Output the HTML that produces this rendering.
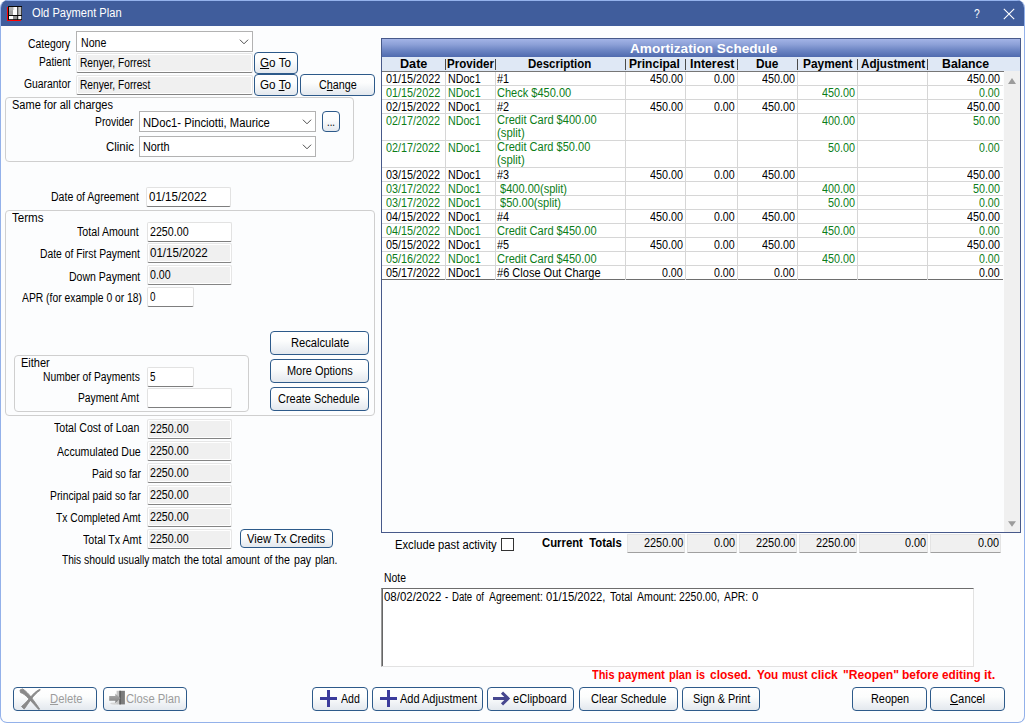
<!DOCTYPE html><html><head><meta charset="utf-8"><title>Old Payment Plan</title><style>
*{box-sizing:border-box;margin:0;padding:0}
html,body{width:1025px;height:723px;overflow:hidden;background:#fff}
body{font-family:"Liberation Sans",sans-serif;font-size:12px;color:#000;position:relative;line-height:14px}
.a{position:absolute}
.t{position:absolute;white-space:nowrap;line-height:14px;height:14px;transform-origin:0 0;display:block}
#win{position:absolute;left:0;top:0;width:1025px;height:723px;background:#fcfdfe;border:1px solid #93b1ea;border-top:none;border-radius:8px 8px 7px 7px;overflow:hidden}
#win>*{margin-left:-1px}
#tb{position:absolute;left:0;top:0;width:1025px;height:26px;background:#405d9c;border-top:1px solid #94b2ec}
.tx{position:absolute;background:#fff;border:1px solid #e2e2e2;border-bottom:1px solid #7e7e7e;border-radius:2px}
.tx.ro{background:#f0f0f0;box-shadow:inset 0 0 0 1px #fff;border-color:#e6e6e6;border-bottom-color:#848484}
.cb{position:absolute;background:#fff;border:1px solid #b2b2b2}
.btn{position:absolute;border:1px solid #2d5a8a;border-radius:4px;background:linear-gradient(#ffffff 0%,#fcfdfd 40%,#e3e8ee 100%)}
.gb{position:absolute;border:1px solid #cfcfcf;border-radius:4px}
#grid{position:absolute;left:381px;top:38px;width:640px;height:495px;border:1px solid #47598a;background:#fcfdfe;overflow:hidden}
#grid>*{margin-left:0}
#gt{position:absolute;left:0;top:0;width:638px;height:18px;background:linear-gradient(#a3b4e6 0%,#8da1d8 30%,#6a83c2 65%,#4f6aae 100%)}
#gh{position:absolute;left:0;top:18px;width:638px;height:15px;background:#dfe8f5;border-bottom:1px solid #767676}
.hs{position:absolute;top:20px;width:1px;height:11px;background:#4a4a4a}
.row{position:absolute;left:0;width:621px;border-bottom:1px solid #d6d6d6;background:#fff}
.vl{position:absolute;width:1px;background:#d6d6d6}
.tot{position:absolute;background:#f0f0f0;border:1px solid #e4e4e4;border-bottom-color:#a0a0a0;border-radius:1px}
</style></head><body>
<div id="win">
<div id="tb"></div>
<svg class="a" style="left:7px;top:6px" width="15" height="15" viewBox="0 0 15 15"><rect x="0" y="1" width="1" height="14" fill="#f00"/><rect x="0" y="14" width="14" height="1" fill="#f00"/><rect x="1" y="0" width="14" height="14" fill="#080808"/><rect x="2" y="1" width="4" height="8" fill="#b0b0b0"/><rect x="2" y="4.5" width="4" height="4.5" fill="#a0a0a0"/><rect x="6" y="1" width="4.3" height="8" fill="#fff"/><rect x="6" y="1" width="1.2" height="3" fill="#d8d8d8"/><rect x="11.2" y="1" width="3.1" height="8" fill="#c0c0c0"/><rect x="2" y="10" width="4" height="3.2" fill="#fff"/><rect x="6" y="10" width="4.3" height="3.2" fill="#909090"/><rect x="11.2" y="10" width="3.1" height="3.2" fill="#fff"/></svg>
<span class="t" style="left:32.20px;top:6px;transform:scaleX(0.8893);font-size:12.5px;color:#fff;">Old Payment Plan</span>
<span class="t" style="left:973.50px;top:7px;transform:scaleX(0.8673);color:#fff;">?</span>
<svg class="a" style="left:1003px;top:8px" width="12" height="12" viewBox="0 0 12 12"><path d="M0.8 0.8 L11.2 11.2 M11.2 0.8 L0.8 11.2" stroke="#fff" stroke-width="1.1" fill="none"/></svg>
<span class="t" style="left:28.40px;top:37px;transform:scaleX(0.8644);">Category</span>
<div class="cb" style="left:76px;top:31px;width:177px;height:21px;"></div>
<svg class="a" style="left:239px;top:39px" width="10" height="6" viewBox="0 0 10 6"><path d="M0.9 0.7 L5 4.8 L9.1 0.7" stroke="#444" stroke-width="0.95" fill="none"/></svg>
<span class="t" style="left:80.50px;top:36px;transform:scaleX(0.8819);">None</span>
<span class="t" style="left:38.60px;top:55px;transform:scaleX(0.8485);">Patient</span>
<div class="tx ro" style="left:76px;top:53px;width:177px;height:20px;"></div>
<span class="t" style="left:79.50px;top:56px;transform:scaleX(0.8500);">Renyer, Forrest</span>
<span class="t" style="left:23.80px;top:77px;transform:scaleX(0.8643);">Guarantor</span>
<div class="tx ro" style="left:76px;top:75px;width:177px;height:20px;"></div>
<span class="t" style="left:79.50px;top:78px;transform:scaleX(0.8500);">Renyer, Forrest</span>
<div class="btn" style="left:254px;top:52px;width:44px;height:22px;"></div>
<span class="t" style="left:260.00px;top:56px;transform:scaleX(0.9745);"><u>G</u>o To</span>
<div class="btn" style="left:254px;top:74px;width:44px;height:22px;"></div>
<span class="t" style="left:260.00px;top:78px;transform:scaleX(0.9745);">Go <u>T</u>o</span>
<div class="btn" style="left:300px;top:74px;width:75px;height:22px;"></div>
<span class="t" style="left:319.00px;top:78px;transform:scaleX(0.8987);">C<u>h</u>ange</span>
<div class="gb" style="left:5px;top:97px;width:349px;height:65px;"></div>
<span class="t" style="left:12.00px;top:98px;transform:scaleX(0.9177);">Same for all charges</span>
<span class="t" style="left:95.20px;top:115px;transform:scaleX(0.8593);">Provider</span>
<div class="cb" style="left:139px;top:111px;width:177px;height:21px;"></div>
<svg class="a" style="left:302px;top:119px" width="10" height="6" viewBox="0 0 10 6"><path d="M0.9 0.7 L5 4.8 L9.1 0.7" stroke="#444" stroke-width="0.95" fill="none"/></svg>
<span class="t" style="left:143.40px;top:116px;transform:scaleX(0.9367);">NDoc1- Pinciotti, Maurice</span>
<div class="btn" style="left:322px;top:111px;width:18px;height:21px;"></div>
<span class="t" style="left:326.50px;top:115px;transform:scaleX(0.7988);">...</span>
<span class="t" style="left:106.40px;top:140px;transform:scaleX(0.9542);">Clinic</span>
<div class="cb" style="left:139px;top:136px;width:177px;height:21px;"></div>
<svg class="a" style="left:302px;top:144px" width="10" height="6" viewBox="0 0 10 6"><path d="M0.9 0.7 L5 4.8 L9.1 0.7" stroke="#444" stroke-width="0.95" fill="none"/></svg>
<span class="t" style="left:143.20px;top:140px;transform:scaleX(0.9031);">North</span>
<span class="t" style="left:51.20px;top:190px;transform:scaleX(0.8775);">Date of Agreement</span>
<div class="tx" style="left:146px;top:187px;width:85px;height:20px;"></div>
<span class="t" style="left:148.60px;top:190px;transform:scaleX(0.9623);">01/15/2022</span>
<div class="gb" style="left:5px;top:210px;width:370px;height:206px;"></div>
<span class="t" style="left:11.90px;top:211px;transform:scaleX(0.9672);">Terms</span>
<span class="t" style="left:77.10px;top:225px;transform:scaleX(0.8879);">Total Amount</span>
<div class="tx" style="left:147px;top:222px;width:85px;height:20px;"></div>
<span class="t" style="left:150.00px;top:225px;transform:scaleX(0.8896);">2250.00</span>
<span class="t" style="left:40.20px;top:247px;transform:scaleX(0.8617);">Date of First Payment</span>
<div class="tx ro" style="left:147px;top:243px;width:85px;height:20px;"></div>
<span class="t" style="left:150.00px;top:246px;transform:scaleX(0.9623);">01/15/2022</span>
<span class="t" style="left:68.80px;top:270px;transform:scaleX(0.8762);">Down Payment</span>
<div class="tx ro" style="left:147px;top:265px;width:85px;height:20px;"></div>
<span class="t" style="left:150.00px;top:268px;transform:scaleX(0.8862);">0.00</span>
<span class="t" style="left:21.50px;top:291px;transform:scaleX(0.8609);">APR (for example 0 or 18)</span>
<div class="tx" style="left:147px;top:287px;width:47px;height:20px;"></div>
<span class="t" style="left:150.30px;top:290px;transform:scaleX(0.8224);">0</span>
<div class="gb" style="left:14px;top:355px;width:235px;height:57px;"></div>
<span class="t" style="left:21.00px;top:356px;transform:scaleX(0.9184);">Either</span>
<span class="t" style="left:43.40px;top:370px;transform:scaleX(0.8588);">Number of Payments</span>
<div class="tx" style="left:147px;top:367px;width:47px;height:20px;"></div>
<span class="t" style="left:150.30px;top:370px;transform:scaleX(0.8224);">5</span>
<span class="t" style="left:78.00px;top:391px;transform:scaleX(0.8546);">Payment Amt</span>
<div class="tx" style="left:147px;top:388px;width:85px;height:20px;"></div>
<div class="btn" style="left:270px;top:331px;width:99px;height:24px;"></div>
<span class="t" style="left:290.70px;top:336px;transform:scaleX(0.9298);">Recalculate</span>
<div class="btn" style="left:270px;top:359px;width:99px;height:24px;"></div>
<span class="t" style="left:286.50px;top:364px;transform:scaleX(0.9121);">More Options</span>
<div class="btn" style="left:270px;top:387px;width:99px;height:24px;"></div>
<span class="t" style="left:278.20px;top:392px;transform:scaleX(0.9128);">Create Schedule</span>
<span class="t" style="left:53.70px;top:421px;transform:scaleX(0.8818);">Total Cost of Loan</span>
<div class="tx ro" style="left:147px;top:419px;width:85px;height:20px;"></div>
<span class="t" style="left:150.00px;top:422px;transform:scaleX(0.8896);">2250.00</span>
<span class="t" style="left:57.30px;top:445px;transform:scaleX(0.8837);">Accumulated Due</span>
<div class="tx ro" style="left:147px;top:441px;width:85px;height:20px;"></div>
<span class="t" style="left:150.00px;top:444px;transform:scaleX(0.8896);">2250.00</span>
<span class="t" style="left:92.20px;top:467px;transform:scaleX(0.8505);">Paid so far</span>
<div class="tx ro" style="left:147px;top:463px;width:85px;height:20px;"></div>
<span class="t" style="left:150.00px;top:466px;transform:scaleX(0.8896);">2250.00</span>
<span class="t" style="left:50.20px;top:489px;transform:scaleX(0.8616);">Principal paid so far</span>
<div class="tx ro" style="left:147px;top:485px;width:85px;height:20px;"></div>
<span class="t" style="left:150.00px;top:488px;transform:scaleX(0.8896);">2250.00</span>
<span class="t" style="left:56.30px;top:511px;transform:scaleX(0.8581);">Tx Completed Amt</span>
<div class="tx ro" style="left:147px;top:507px;width:85px;height:20px;"></div>
<span class="t" style="left:150.00px;top:510px;transform:scaleX(0.8896);">2250.00</span>
<span class="t" style="left:82.60px;top:533px;transform:scaleX(0.8874);">Total Tx Amt</span>
<div class="tx ro" style="left:147px;top:529px;width:85px;height:20px;"></div>
<span class="t" style="left:150.00px;top:532px;transform:scaleX(0.8896);">2250.00</span>
<div class="btn" style="left:240px;top:529px;width:93px;height:19px;"></div>
<span class="t" style="left:247.00px;top:532px;transform:scaleX(0.9331);">View Tx Credits</span>
<span class="t" style="left:61.80px;top:553px;transform:scaleX(0.8425);">This</span>
<span class="t" style="left:83.80px;top:553px;transform:scaleX(0.8763);">should</span>
<span class="t" style="left:117.50px;top:553px;transform:scaleX(0.8378);">usually</span>
<span class="t" style="left:152.30px;top:553px;transform:scaleX(0.8627);">match</span>
<span class="t" style="left:184.00px;top:553px;transform:scaleX(0.9049);">the</span>
<span class="t" style="left:202.40px;top:553px;transform:scaleX(0.8815);">total</span>
<span class="t" style="left:225.90px;top:553px;transform:scaleX(0.8443);">amount</span>
<span class="t" style="left:263.50px;top:553px;transform:scaleX(0.8387);">of</span>
<span class="t" style="left:275.40px;top:553px;transform:scaleX(0.8929);">the</span>
<span class="t" style="left:293.80px;top:553px;transform:scaleX(0.8833);">pay</span>
<span class="t" style="left:314.50px;top:553px;transform:scaleX(0.8643);">plan.</span>
<div id="grid"><div id="gt"></div><div id="gh"></div>
<div class="hs" style="left:63px"></div>
<div class="hs" style="left:113px"></div>
<div class="hs" style="left:243px"></div>
<div class="hs" style="left:303px"></div>
<div class="hs" style="left:355px"></div>
<div class="hs" style="left:415px"></div>
<div class="hs" style="left:475px"></div>
<div class="hs" style="left:545px"></div>
<div class="row" style="top:33px;height:14px"></div>
<div class="row" style="top:47px;height:14px"></div>
<div class="row" style="top:61px;height:14px"></div>
<div class="row" style="top:75px;height:27px"></div>
<div class="row" style="top:102px;height:27px"></div>
<div class="row" style="top:129px;height:14px"></div>
<div class="row" style="top:143px;height:14px"></div>
<div class="row" style="top:157px;height:14px"></div>
<div class="row" style="top:171px;height:14px"></div>
<div class="row" style="top:185px;height:14px"></div>
<div class="row" style="top:199px;height:14px"></div>
<div class="row" style="top:213px;height:14px"></div>
<div class="row" style="top:227px;height:14px;border-bottom-color:#6e6e6e"></div>
<div class="vl" style="left:63px;top:33px;height:208px"></div>
<div class="vl" style="left:113px;top:33px;height:208px"></div>
<div class="vl" style="left:243px;top:33px;height:208px"></div>
<div class="vl" style="left:303px;top:33px;height:208px"></div>
<div class="vl" style="left:355px;top:33px;height:208px"></div>
<div class="vl" style="left:415px;top:33px;height:208px"></div>
<div class="vl" style="left:475px;top:33px;height:208px"></div>
<div class="vl" style="left:545px;top:33px;height:208px"></div>
<div class="a" style="left:622px;top:32px;width:16px;height:462px;background:#f0f0f0"></div>
<svg class="a" style="left:626px;top:39px" width="8" height="6" viewBox="0 0 8 6"><path d="M0 5.9 L4 0 L8 5.9Z" fill="#9c9c9c"/></svg>
<svg class="a" style="left:626px;top:482px" width="8" height="6" viewBox="0 0 8 6"><path d="M0 0.2 L4 5.8 L8 0.2Z" fill="#9c9c9c"/></svg>
</div>
<span class="t" style="left:629.70px;top:42px;transform:scaleX(1.0064);font-size:13.5px;font-weight:bold;color:#fff;">Amortization Schedule</span>
<span class="t" style="left:400.35px;top:57px;transform:scaleX(1.0095);font-size:12.5px;font-weight:bold;">Date</span>
<span class="t" style="left:446.60px;top:57px;transform:scaleX(0.9247);font-size:12.5px;font-weight:bold;">Provider</span>
<span class="t" style="left:528.40px;top:57px;transform:scaleX(0.9205);font-size:12.5px;font-weight:bold;">Description</span>
<span class="t" style="left:629.10px;top:57px;transform:scaleX(0.9641);font-size:12.5px;font-weight:bold;">Principal</span>
<span class="t" style="left:690.00px;top:57px;transform:scaleX(0.9833);font-size:12.5px;font-weight:bold;">Interest</span>
<span class="t" style="left:756.30px;top:57px;transform:scaleX(0.9524);font-size:12.5px;font-weight:bold;">Due</span>
<span class="t" style="left:803.40px;top:57px;transform:scaleX(0.9499);font-size:12.5px;font-weight:bold;">Payment</span>
<span class="t" style="left:861.10px;top:57px;transform:scaleX(0.9338);font-size:12.5px;font-weight:bold;">Adjustment</span>
<span class="t" style="left:942.10px;top:57px;transform:scaleX(0.9843);font-size:12.5px;font-weight:bold;">Balance</span>
<span class="t" style="left:386.30px;top:72px;transform:scaleX(0.9024);">01/15/2022</span>
<span class="t" style="left:447.80px;top:72px;transform:scaleX(0.8886);">NDoc1</span>
<span class="t" style="left:497.00px;top:72px;transform:scaleX(0.9000);">#1</span>
<span class="t" style="left:649.60px;top:72px;transform:scaleX(0.8991);">450.00</span>
<span class="t" style="left:713.90px;top:72px;transform:scaleX(0.8862);">0.00</span>
<span class="t" style="left:761.60px;top:72px;transform:scaleX(0.8991);">450.00</span>
<span class="t" style="left:966.60px;top:72px;transform:scaleX(0.8991);">450.00</span>
<span class="t" style="left:386.30px;top:86px;transform:scaleX(0.9024);color:#0c7d18;">01/15/2022</span>
<span class="t" style="left:447.80px;top:86px;transform:scaleX(0.8886);color:#0c7d18;">NDoc1</span>
<span class="t" style="left:497.00px;top:86px;transform:scaleX(0.9191);color:#0c7d18;">Check $450.00</span>
<span class="t" style="left:821.60px;top:86px;transform:scaleX(0.8991);color:#0c7d18;">450.00</span>
<span class="t" style="left:978.90px;top:86px;transform:scaleX(0.8862);color:#0c7d18;">0.00</span>
<span class="t" style="left:386.30px;top:100px;transform:scaleX(0.9000);">02/15/2022</span>
<span class="t" style="left:447.80px;top:100px;transform:scaleX(0.8886);">NDoc1</span>
<span class="t" style="left:497.00px;top:100px;transform:scaleX(0.9000);">#2</span>
<span class="t" style="left:649.60px;top:100px;transform:scaleX(0.8991);">450.00</span>
<span class="t" style="left:713.90px;top:100px;transform:scaleX(0.8862);">0.00</span>
<span class="t" style="left:761.60px;top:100px;transform:scaleX(0.8991);">450.00</span>
<span class="t" style="left:966.60px;top:100px;transform:scaleX(0.8991);">450.00</span>
<span class="t" style="left:386.30px;top:114px;transform:scaleX(0.9000);color:#0c7d18;">02/17/2022</span>
<span class="t" style="left:447.80px;top:114px;transform:scaleX(0.8886);color:#0c7d18;">NDoc1</span>
<span class="t" style="left:497.00px;top:113px;transform:scaleX(0.9216);color:#0c7d18;">Credit Card $400.00</span>
<span class="t" style="left:497.00px;top:126px;transform:scaleX(0.9440);color:#0c7d18;">(split)</span>
<span class="t" style="left:821.57px;top:114px;transform:scaleX(0.9000);color:#0c7d18;">400.00</span>
<span class="t" style="left:972.57px;top:114px;transform:scaleX(0.9000);color:#0c7d18;">50.00</span>
<span class="t" style="left:386.30px;top:141px;transform:scaleX(0.9000);color:#0c7d18;">02/17/2022</span>
<span class="t" style="left:447.80px;top:141px;transform:scaleX(0.8886);color:#0c7d18;">NDoc1</span>
<span class="t" style="left:497.00px;top:140px;transform:scaleX(0.9202);color:#0c7d18;">Credit Card $50.00</span>
<span class="t" style="left:497.00px;top:153px;transform:scaleX(0.9440);color:#0c7d18;">(split)</span>
<span class="t" style="left:827.57px;top:141px;transform:scaleX(0.9000);color:#0c7d18;">50.00</span>
<span class="t" style="left:978.90px;top:141px;transform:scaleX(0.8862);color:#0c7d18;">0.00</span>
<span class="t" style="left:386.30px;top:168px;transform:scaleX(0.9000);">03/15/2022</span>
<span class="t" style="left:447.80px;top:168px;transform:scaleX(0.8886);">NDoc1</span>
<span class="t" style="left:497.00px;top:168px;transform:scaleX(0.9000);">#3</span>
<span class="t" style="left:649.60px;top:168px;transform:scaleX(0.8991);">450.00</span>
<span class="t" style="left:713.90px;top:168px;transform:scaleX(0.8862);">0.00</span>
<span class="t" style="left:761.60px;top:168px;transform:scaleX(0.8991);">450.00</span>
<span class="t" style="left:966.60px;top:168px;transform:scaleX(0.8991);">450.00</span>
<span class="t" style="left:386.30px;top:182px;transform:scaleX(0.9000);color:#0c7d18;">03/17/2022</span>
<span class="t" style="left:447.80px;top:182px;transform:scaleX(0.8886);color:#0c7d18;">NDoc1</span>
<span class="t" style="left:500.30px;top:182px;transform:scaleX(0.9214);color:#0c7d18;">$400.00(split)</span>
<span class="t" style="left:821.57px;top:182px;transform:scaleX(0.9000);color:#0c7d18;">400.00</span>
<span class="t" style="left:972.57px;top:182px;transform:scaleX(0.9000);color:#0c7d18;">50.00</span>
<span class="t" style="left:386.30px;top:196px;transform:scaleX(0.9000);color:#0c7d18;">03/17/2022</span>
<span class="t" style="left:447.80px;top:196px;transform:scaleX(0.8886);color:#0c7d18;">NDoc1</span>
<span class="t" style="left:500.30px;top:196px;transform:scaleX(0.9221);color:#0c7d18;">$50.00(split)</span>
<span class="t" style="left:827.57px;top:196px;transform:scaleX(0.9000);color:#0c7d18;">50.00</span>
<span class="t" style="left:978.90px;top:196px;transform:scaleX(0.8862);color:#0c7d18;">0.00</span>
<span class="t" style="left:386.30px;top:210px;transform:scaleX(0.9000);">04/15/2022</span>
<span class="t" style="left:447.80px;top:210px;transform:scaleX(0.8886);">NDoc1</span>
<span class="t" style="left:497.00px;top:210px;transform:scaleX(0.9000);">#4</span>
<span class="t" style="left:649.60px;top:210px;transform:scaleX(0.8991);">450.00</span>
<span class="t" style="left:713.90px;top:210px;transform:scaleX(0.8862);">0.00</span>
<span class="t" style="left:761.60px;top:210px;transform:scaleX(0.8991);">450.00</span>
<span class="t" style="left:966.60px;top:210px;transform:scaleX(0.8991);">450.00</span>
<span class="t" style="left:386.30px;top:224px;transform:scaleX(0.9000);color:#0c7d18;">04/15/2022</span>
<span class="t" style="left:447.80px;top:224px;transform:scaleX(0.8886);color:#0c7d18;">NDoc1</span>
<span class="t" style="left:497.00px;top:224px;transform:scaleX(0.9216);color:#0c7d18;">Credit Card $450.00</span>
<span class="t" style="left:821.60px;top:224px;transform:scaleX(0.8991);color:#0c7d18;">450.00</span>
<span class="t" style="left:978.90px;top:224px;transform:scaleX(0.8862);color:#0c7d18;">0.00</span>
<span class="t" style="left:386.30px;top:238px;transform:scaleX(0.9000);">05/15/2022</span>
<span class="t" style="left:447.80px;top:238px;transform:scaleX(0.8886);">NDoc1</span>
<span class="t" style="left:497.00px;top:238px;transform:scaleX(0.9000);">#5</span>
<span class="t" style="left:649.60px;top:238px;transform:scaleX(0.8991);">450.00</span>
<span class="t" style="left:713.90px;top:238px;transform:scaleX(0.8862);">0.00</span>
<span class="t" style="left:761.60px;top:238px;transform:scaleX(0.8991);">450.00</span>
<span class="t" style="left:966.60px;top:238px;transform:scaleX(0.8991);">450.00</span>
<span class="t" style="left:386.30px;top:252px;transform:scaleX(0.9000);color:#0c7d18;">05/16/2022</span>
<span class="t" style="left:447.80px;top:252px;transform:scaleX(0.8886);color:#0c7d18;">NDoc1</span>
<span class="t" style="left:497.00px;top:252px;transform:scaleX(0.9216);color:#0c7d18;">Credit Card $450.00</span>
<span class="t" style="left:821.60px;top:252px;transform:scaleX(0.8991);color:#0c7d18;">450.00</span>
<span class="t" style="left:978.90px;top:252px;transform:scaleX(0.8862);color:#0c7d18;">0.00</span>
<span class="t" style="left:386.30px;top:266px;transform:scaleX(0.9000);">05/17/2022</span>
<span class="t" style="left:447.80px;top:266px;transform:scaleX(0.8886);">NDoc1</span>
<span class="t" style="left:497.00px;top:266px;transform:scaleX(0.9190);">#6 Close Out Charge</span>
<span class="t" style="left:661.90px;top:266px;transform:scaleX(0.8862);">0.00</span>
<span class="t" style="left:713.90px;top:266px;transform:scaleX(0.8862);">0.00</span>
<span class="t" style="left:773.90px;top:266px;transform:scaleX(0.8862);">0.00</span>
<span class="t" style="left:978.90px;top:266px;transform:scaleX(0.8862);">0.00</span>
<span class="t" style="left:394.50px;top:538px;transform:scaleX(0.9354);">Exclude past activity</span>
<div class="a" style="left:501px;top:538px;width:13px;height:13px;border:1px solid #333;background:#fff"></div>
<span class="t" style="left:541.60px;top:536px;transform:scaleX(0.9058);font-size:12.5px;font-weight:bold;">Current&nbsp; Totals</span>
<div class="tot" style="left:627px;top:534px;width:58px;height:19px;"></div>
<span class="t" style="left:644.10px;top:536px;transform:scaleX(0.9080);">2250.00</span>
<div class="tot" style="left:687px;top:534px;width:50px;height:19px;"></div>
<span class="t" style="left:714.40px;top:536px;transform:scaleX(0.9033);">0.00</span>
<div class="tot" style="left:739px;top:534px;width:58px;height:19px;"></div>
<span class="t" style="left:756.10px;top:536px;transform:scaleX(0.9080);">2250.00</span>
<div class="tot" style="left:799px;top:534px;width:58px;height:19px;"></div>
<span class="t" style="left:816.10px;top:536px;transform:scaleX(0.9080);">2250.00</span>
<div class="tot" style="left:859px;top:534px;width:69px;height:19px;"></div>
<span class="t" style="left:905.40px;top:536px;transform:scaleX(0.9033);">0.00</span>
<div class="tot" style="left:930px;top:534px;width:71px;height:19px;"></div>
<span class="t" style="left:978.40px;top:536px;transform:scaleX(0.9033);">0.00</span>
<span class="t" style="left:383.50px;top:571px;transform:scaleX(0.8675);">Note</span>
<div class="a" style="left:381px;top:588px;width:593px;height:79px;background:#fff;border:1px solid #e2e2e2;border-top:1px solid #6d6d6d;border-left:1px solid #9a9a9a;box-shadow:inset 1px 0 0 #666"></div>
<span class="t" style="left:384.00px;top:590px;transform:scaleX(0.9540);">08/02/2022</span>
<span class="t" style="left:445.40px;top:590px;transform:scaleX(0.8000);">-</span>
<span class="t" style="left:451.50px;top:590px;transform:scaleX(0.7965);">Date</span>
<span class="t" style="left:475.90px;top:590px;transform:scaleX(0.7988);">of</span>
<span class="t" style="left:488.80px;top:590px;transform:scaleX(0.8671);">Agreement:</span>
<span class="t" style="left:546.40px;top:590px;transform:scaleX(0.9384);">01/15/2022,</span>
<span class="t" style="left:610.40px;top:590px;transform:scaleX(0.8833);">Total</span>
<span class="t" style="left:636.60px;top:590px;transform:scaleX(0.8836);">Amount:</span>
<span class="t" style="left:679.30px;top:590px;transform:scaleX(0.8690);">2250.00,</span>
<span class="t" style="left:723.70px;top:590px;transform:scaleX(0.8638);">APR:</span>
<span class="t" style="left:751.70px;top:590px;transform:scaleX(0.9421);">0</span>
<span class="t" style="left:592.20px;top:668px;transform:scaleX(0.9120);font-weight:bold;color:#ff0000;">This</span>
<span class="t" style="left:618.40px;top:668px;transform:scaleX(0.9502);font-weight:bold;color:#ff0000;">payment</span>
<span class="t" style="left:669.30px;top:668px;transform:scaleX(0.9201);font-weight:bold;color:#ff0000;">plan</span>
<span class="t" style="left:696.30px;top:668px;transform:scaleX(0.8986);font-weight:bold;color:#ff0000;">is</span>
<span class="t" style="left:710.20px;top:668px;transform:scaleX(0.9961);font-weight:bold;color:#ff0000;">closed.</span>
<span class="t" style="left:756.70px;top:668px;transform:scaleX(0.9779);font-weight:bold;color:#ff0000;">You</span>
<span class="t" style="left:781.60px;top:668px;transform:scaleX(0.8894);font-weight:bold;color:#ff0000;">must</span>
<span class="t" style="left:811.30px;top:668px;transform:scaleX(1.0036);font-weight:bold;color:#ff0000;">click</span>
<span class="t" style="left:842.70px;top:668px;transform:scaleX(1.0110);font-weight:bold;color:#ff0000;">&quot;Reopen&quot;</span>
<span class="t" style="left:902.20px;top:668px;transform:scaleX(0.9976);font-weight:bold;color:#ff0000;">before</span>
<span class="t" style="left:942.20px;top:668px;transform:scaleX(0.9815);font-weight:bold;color:#ff0000;">editing</span>
<span class="t" style="left:984.30px;top:668px;transform:scaleX(1.0682);font-weight:bold;color:#ff0000;">it.</span>
<div class="btn" style="left:13px;top:687px;width:84px;height:24px;"></div>
<svg class="a" style="left:19px;top:688px" width="23" height="22" viewBox="0 0 23 22"><path d="M1.0 2.0 L3.6 0.9 C7 3 10 6.3 12.6 9.8 C15.6 13.8 18.6 17.8 20.6 21.1 L19.6 21.4 C16.4 17.6 13 14.2 9.8 10.8 C7 7.8 4.6 5.4 1.5 4.6 Z M20.8 1.3 L21.3 2.1 C17.6 4.6 14.6 8 12.2 11.2 C9.6 14.6 7.6 17.8 5.2 21.1 L2.5 18.5 C5.6 16 8.6 12.8 11.1 9.7 C13.8 6.3 17 3.1 20.8 1.3 Z" fill="#8a8a8a" stroke="#8a8a8a" stroke-width="0.9" stroke-linejoin="round"/></svg>
<span class="t" style="left:50.00px;top:692px;transform:scaleX(0.9394);color:#9c9c9c;"><u>D</u>elete</span>
<div class="btn" style="left:103px;top:687px;width:84px;height:24px;"></div>
<svg class="a" style="left:109px;top:690px" width="17" height="16" viewBox="0 0 17 16"><defs><linearGradient id="ag" x1="0" y1="0" x2="0" y2="1"><stop offset="0" stop-color="#b2b2b2"/><stop offset="1" stop-color="#7e7e7e"/></linearGradient></defs><ellipse cx="5.5" cy="13.6" rx="4.2" ry="1.1" fill="#d6d6d6"/><rect x="7.6" y="0.8" width="3.2" height="13.6" fill="#c6c6c6"/><rect x="10.4" y="0.8" width="5.5" height="13.6" fill="#7c7c7c"/><rect x="10.4" y="0.8" width="1.5" height="13.6" fill="#5e5e5e"/><path d="M0.2 5.9 H6.3 V3.4 L11.4 8.3 L6.3 13.2 V10.7 H0.2Z" fill="url(#ag)"/></svg>
<span class="t" style="left:126.10px;top:692px;transform:scaleX(0.9357);color:#9c9c9c;">Close Plan</span>
<div class="btn" style="left:312px;top:687px;width:56px;height:24px;"></div>
<svg class="a" style="left:320px;top:690px" width="17" height="17" viewBox="0 0 17 17"><path d="M8.5 0 V17 M0 8.5 H17" stroke="#3c3c9c" stroke-width="3" fill="none"/></svg>
<span class="t" style="left:341.40px;top:692px;transform:scaleX(0.8802);">Add</span>
<div class="btn" style="left:372px;top:687px;width:111px;height:24px;"></div>
<svg class="a" style="left:380px;top:690px" width="17" height="17" viewBox="0 0 17 17"><path d="M8.5 0 V17 M0 8.5 H17" stroke="#3c3c9c" stroke-width="3" fill="none"/></svg>
<span class="t" style="left:400.40px;top:692px;transform:scaleX(0.9160);">Add Adjustment</span>
<div class="btn" style="left:487px;top:687px;width:87px;height:24px;"></div>
<svg class="a" style="left:492px;top:690px" width="20" height="17" viewBox="0 0 20 17"><path d="M1 8.5 H15.5 M10 2.6 L16 8.5 L10 14.4" stroke="#47478f" stroke-width="3" fill="none"/></svg>
<span class="t" style="left:513.00px;top:692px;transform:scaleX(0.9234);">eClipboard</span>
<div class="btn" style="left:579px;top:687px;width:99px;height:24px;"></div>
<span class="t" style="left:591.30px;top:692px;transform:scaleX(0.9188);">Clear Schedule</span>
<div class="btn" style="left:682px;top:687px;width:78px;height:24px;"></div>
<span class="t" style="left:693.00px;top:692px;transform:scaleX(0.9026);">Sign &amp; Print</span>
<div class="btn" style="left:852px;top:687px;width:75px;height:24px;"></div>
<span class="t" style="left:870.90px;top:692px;transform:scaleX(0.9061);">Reopen</span>
<div class="btn" style="left:930px;top:687px;width:75px;height:24px;"></div>
<span class="t" style="left:950.40px;top:692px;transform:scaleX(0.9368);"><u>C</u>ancel</span>
</div></body></html>
